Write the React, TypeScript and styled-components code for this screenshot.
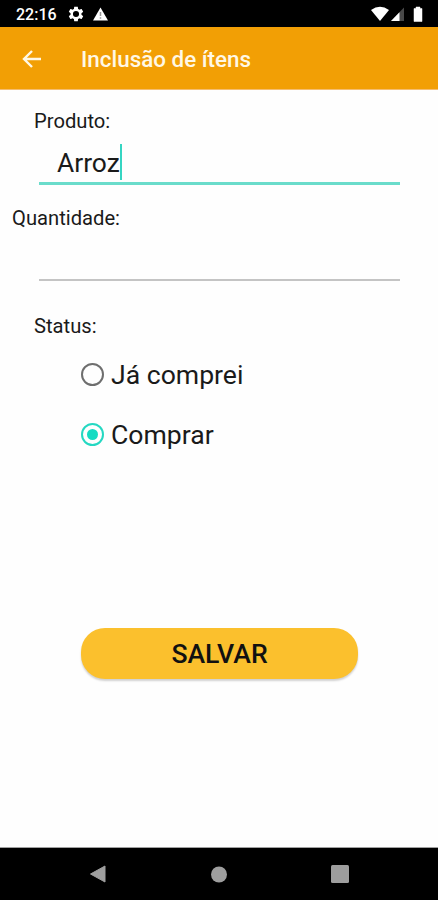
import React, { useState } from 'react';
import styled, { createGlobalStyle } from 'styled-components';

const GlobalStyle = createGlobalStyle`
  * { box-sizing: border-box; }
  body { margin: 0; background: #fefefe; font-family: Roboto, sans-serif; }
`;

const Screen = styled.div`
  display: flex;
  flex-direction: column;
  width: 438px;
  height: 900px;
  background: #fefefe;
  color: #1a1a1a;
  overflow: hidden;
`;

const StatusBar = styled.header`
  display: flex;
  align-items: center;
  flex: 0 0 27px;
  padding: 1px 14px 0 16px;
  background: #000;
  color: #fff;
`;

const Clock = styled.span`
  width: 52px;
  padding-top: 1px;
  font-size: 16px;
  font-weight: 500;
  line-height: 25px;
  white-space: nowrap;
`;

const StatusIcons = styled.div<{ $end?: boolean }>`
  display: flex;
  align-items: center;
  gap: ${(p) => (p.$end ? 0 : '9px')};
  margin-left: ${(p) => (p.$end ? 'auto' : 0)};
  svg { display: block; }
`;

const AppBar = styled.nav`
  display: flex;
  align-items: center;
  flex: 0 0 63px;
  padding: 3px 22px 0;
  background: #f29f05;
  border-bottom: 1px solid #f5bd70;
  color: #fff8e6;
`;

const BackButton = styled.button`
  width: 59px;
  height: 40px;
  padding: 0;
  border: 0;
  background: none;
  color: inherit;
  svg { display: block; }
`;

const Title = styled.h1`
  margin: 0 0 2px;
  font-size: 22.4px;
  font-weight: 500;
  line-height: 30px;
  white-space: nowrap;
`;

const Form = styled.main`
  display: flex;
  flex-direction: column;
  flex: 1;
  border-bottom: 1px solid #a0a0a0;
`;

const Label = styled.label<{ $indent: number; $top: number }>`
  margin: ${(p) => p.$top}px 0 0 ${(p) => p.$indent}px;
  font-size: 20.2px;
  line-height: 26px;
  white-space: nowrap;
`;

const Field = styled.div<{ $focused?: boolean }>`
  display: flex;
  align-items: flex-start;
  height: ${(p) => (p.$focused ? 51 : 50)}px;
  margin: 0 38px 0 39px;
  padding: 10px 0 0 18px;
  border-bottom: ${(p) => (p.$focused ? '3px solid #6adccb' : '2px solid #c4c4c4')};
`;

const Value = styled.span`
  padding-top: 1px;
  font-size: 26.4px;
  line-height: 36px;
`;

const Caret = styled.span`
  width: 2px;
  height: 36px;
  background: #35d5c2;
`;

const RadioGroup = styled.div`
  display: flex;
  flex-direction: column;
  gap: 20px;
  margin: 16px 0 0 81px;
`;

const RadioRow = styled.div`
  display: flex;
  align-items: center;
  height: 40px;
  gap: 7px;
  padding-bottom: 1px;
  font-size: 26.6px;
  white-space: nowrap;
`;

const RadioMark = styled.span<{ $checked: boolean }>`
  display: grid;
  place-items: center;
  width: 23px;
  height: 23px;
  margin-top: -1px;
  border: 2px solid ${(p) => (p.$checked ? '#25d8c2' : '#6e6e6e')};
  border-radius: 50%;
  &::after {
    content: '';
    width: 11px;
    height: 11px;
    border-radius: 50%;
    background: ${(p) => (p.$checked ? '#14dbc3' : 'transparent')};
  }
`;

const SaveButton = styled.button`
  width: 277px;
  height: 51px;
  margin: 173px 0 0 81px;
  padding: 0;
  border: 0;
  border-radius: 24px;
  background: #fbc02d;
  box-shadow: 0 2px 2px rgba(0, 0, 0, 0.18);
  color: #111;
  font: 500 26.6px/50px Roboto, sans-serif;
`;

const NavBar = styled.footer`
  display: flex;
  flex: 0 0 52px;
  justify-content: space-between;
  align-items: center;
  padding: 0 89px;
  background: #000;
  svg { display: block; }
`;

const options = ['Já comprei', 'Comprar'];

export default function App() {
  const [status, setStatus] = useState('Comprar');
  return (
    <>
      <GlobalStyle />
      <Screen>
        <StatusBar>
          <Clock>22:16</Clock>
          <StatusIcons>
            <svg width="16" height="16" viewBox="1.5 2 21 20" fill="#fff">
              <path fillRule="evenodd" d="M19.14 12.94c.04-.3.06-.61.06-.94s-.02-.64-.07-.94l2.03-1.58c.18-.14.23-.41.12-.61l-1.92-3.32c-.12-.22-.37-.29-.59-.22l-2.39.96c-.5-.38-1.03-.7-1.62-.94L14.4 2.81c-.04-.24-.24-.41-.48-.41h-3.84c-.24 0-.43.17-.47.41l-.36 2.54c-.59.24-1.13.57-1.62.94l-2.39-.96c-.22-.08-.47 0-.59.22L2.74 8.87c-.12.21-.08.47.12.61l2.03 1.58c-.05.3-.09.63-.09.94s.02.64.07.94l-2.03 1.58c-.18.14-.23.41-.12.61l1.92 3.32c.12.22.37.29.59.22l2.39-.96c.5.38 1.03.7 1.62.94l.36 2.54c.05.24.24.41.48.41h3.84c.24 0 .44-.17.47-.41l.36-2.54c.59-.24 1.13-.56 1.62-.94l2.39.96c.22.08.47 0 .59-.22l1.92-3.32c.12-.22.07-.47-.12-.61l-2.01-1.58zM12 16a4 4 0 1 1 0-8 4 4 0 0 1 0 8z" />
            </svg>
            <svg width="15" height="14" viewBox="0 0 15 14">
              <path d="M7.5 .5 15 13.5H0z" fill="#fff" />
              <path d="M7.5 5v4M7.5 10.3v1.4" stroke="#999" strokeWidth="1.5" />
            </svg>
          </StatusIcons>
          <StatusIcons $end>
            <svg width="53" height="16" viewBox="0 0 53 16">
              <path d="M0 4Q9 -2.5 18 4L9 15z" fill="#fff" />
              <path d="M33 1.5V15H20z" fill="#494949" />
              <path d="M28.5 6.2V15H20z" fill="#fff" />
              <path d="M43 2.5h2V1h4v1.5h2V15.5h-8z" fill="#fff" stroke="#fff" strokeWidth=".5" />
            </svg>
          </StatusIcons>
        </StatusBar>
        <AppBar>
          <BackButton aria-label="Voltar">
            <svg width="20" height="38" viewBox="0 0 20 38" fill="none" stroke="currentColor" strokeWidth="2.4">
              <path d="M19 18H2.5M10 10l-8 8 8 8" />
            </svg>
          </BackButton>
          <Title>Inclusão de ítens</Title>
        </AppBar>
        <Form>
          <Label $top={18} $indent={34}>Produto:</Label>
          <Field $focused>
            <Value>Arroz</Value>
            <Caret />
          </Field>
          <Label $top={20} $indent={12}>Quantidade:</Label>
          <Field />
          <Label $top={32} $indent={34}>Status:</Label>
          <RadioGroup role="radiogroup">
            {options.map((name) => (
              <RadioRow key={name} role="radio" aria-checked={status === name} onClick={() => setStatus(name)}>
                <RadioMark $checked={status === name} />
                {name}
              </RadioRow>
            ))}
          </RadioGroup>
          <SaveButton>SALVAR</SaveButton>
        </Form>
        <NavBar>
          <svg width="17" height="18" viewBox="0 0 17 18"><path d="M16 1v16L1.5 9z" fill="#9e9e9e" stroke="#9e9e9e" strokeLinejoin="round" /></svg>
          <svg width="17" height="17" viewBox="-.5 0 17 17"><circle cx="8.5" cy="8.5" r="8" fill="#9e9e9e" /></svg>
          <svg width="18" height="18" viewBox="0 0 18 18"><rect width="18" height="18" rx="1.5" fill="#9e9e9e" /></svg>
        </NavBar>
      </Screen>
    </>
  );
}
